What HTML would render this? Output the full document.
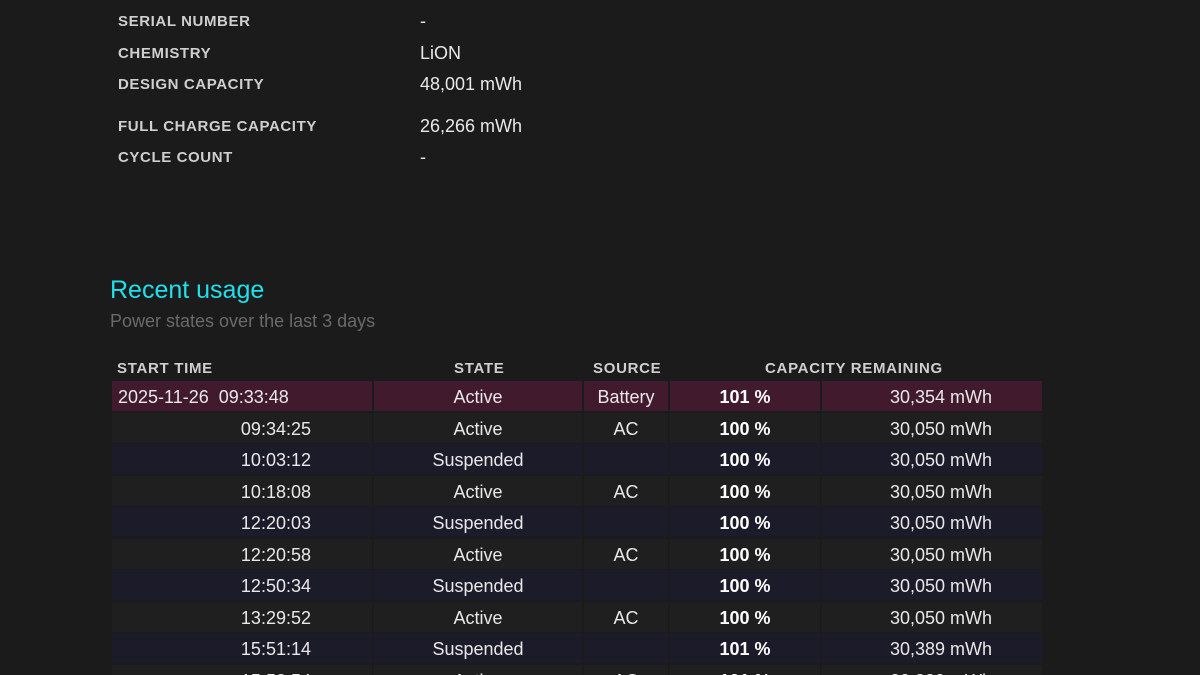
<!DOCTYPE html>
<html><head><meta charset="utf-8"><style>
html,body{margin:0;width:1200px;height:675px;overflow:hidden}
body{background:#1b1b1b;font-family:"Liberation Sans",sans-serif;color:#e8e8e8;position:relative}
.l{position:absolute;left:118px;font-size:15px;font-weight:bold;color:#cfcfcf;letter-spacing:0.6px}
.v{position:absolute;left:420px;font-size:18px;color:#e8e8e8}
h1{position:absolute;left:110px;top:276px;margin:0;font-size:25px;font-weight:normal;color:#1fe0ec}
.sub{position:absolute;left:110px;top:311px;font-size:18px;color:#6a6a6a}
.hd{position:absolute;top:360px;font-size:15px;font-weight:bold;color:#cfcfcf;letter-spacing:0.7px}
.row{position:absolute;left:112px;width:930px;height:30px}
.c{position:absolute;top:0;height:30px;line-height:32px;font-size:18px;text-align:center}
.c1{left:0;width:260px;text-align:right}.c1 span{padding-right:61px}
.c2{left:262px;width:208px}.c3{left:472px;width:84px}.c4{left:558px;width:150px;font-weight:bold;color:#fff}
.c5{left:710px;width:220px;text-align:right}.c5 span{padding-right:50px}
.a .c{background:#1f1f1f}.s .c{background:#1c1b2a}.f .c{background:#421a2e}
</style></head><body>
<div class="l" style="top:13px">SERIAL NUMBER</div><div class="v" style="top:11px">-</div>
<div class="l" style="top:45px">CHEMISTRY</div><div class="v" style="top:43px">LiON</div>
<div class="l" style="top:76px">DESIGN CAPACITY</div><div class="v" style="top:74px">48,001 mWh</div>
<div class="l" style="top:118px">FULL CHARGE CAPACITY</div><div class="v" style="top:116px">26,266 mWh</div>
<div class="l" style="top:149px">CYCLE COUNT</div><div class="v" style="top:147px">-</div>
<h1>Recent usage</h1>
<div class="sub">Power states over the last 3 days</div>
<div class="hd" style="left:117px">START TIME</div>
<div class="hd" style="left:454px">STATE</div>
<div class="hd" style="left:593px">SOURCE</div>
<div class="hd" style="left:765px">CAPACITY REMAINING</div>

<div class="row f" style="top:381px"><div class="c c1" style="text-align:left;padding-left:6px;width:254px">2025-11-26&nbsp; 09:33:48</div><div class="c c2">Active</div><div class="c c3">Battery</div><div class="c c4">101 %</div><div class="c c5"><span>30,354 mWh</span></div></div>
<div class="row a" style="top:413px"><div class="c c1"><span>09:34:25</span></div><div class="c c2">Active</div><div class="c c3">AC</div><div class="c c4">100 %</div><div class="c c5"><span>30,050 mWh</span></div></div>
<div class="row s" style="top:444px"><div class="c c1"><span>10:03:12</span></div><div class="c c2">Suspended</div><div class="c c3"></div><div class="c c4">100 %</div><div class="c c5"><span>30,050 mWh</span></div></div>
<div class="row a" style="top:476px"><div class="c c1"><span>10:18:08</span></div><div class="c c2">Active</div><div class="c c3">AC</div><div class="c c4">100 %</div><div class="c c5"><span>30,050 mWh</span></div></div>
<div class="row s" style="top:507px"><div class="c c1"><span>12:20:03</span></div><div class="c c2">Suspended</div><div class="c c3"></div><div class="c c4">100 %</div><div class="c c5"><span>30,050 mWh</span></div></div>
<div class="row a" style="top:539px"><div class="c c1"><span>12:20:58</span></div><div class="c c2">Active</div><div class="c c3">AC</div><div class="c c4">100 %</div><div class="c c5"><span>30,050 mWh</span></div></div>
<div class="row s" style="top:570px"><div class="c c1"><span>12:50:34</span></div><div class="c c2">Suspended</div><div class="c c3"></div><div class="c c4">100 %</div><div class="c c5"><span>30,050 mWh</span></div></div>
<div class="row a" style="top:602px"><div class="c c1"><span>13:29:52</span></div><div class="c c2">Active</div><div class="c c3">AC</div><div class="c c4">100 %</div><div class="c c5"><span>30,050 mWh</span></div></div>
<div class="row s" style="top:633px"><div class="c c1"><span>15:51:14</span></div><div class="c c2">Suspended</div><div class="c c3"></div><div class="c c4">101 %</div><div class="c c5"><span>30,389 mWh</span></div></div>
<div class="row a" style="top:665px"><div class="c c1"><span>15:52:54</span></div><div class="c c2">Active</div><div class="c c3">AC</div><div class="c c4">101 %</div><div class="c c5"><span>30,389 mWh</span></div></div>
</body></html>
